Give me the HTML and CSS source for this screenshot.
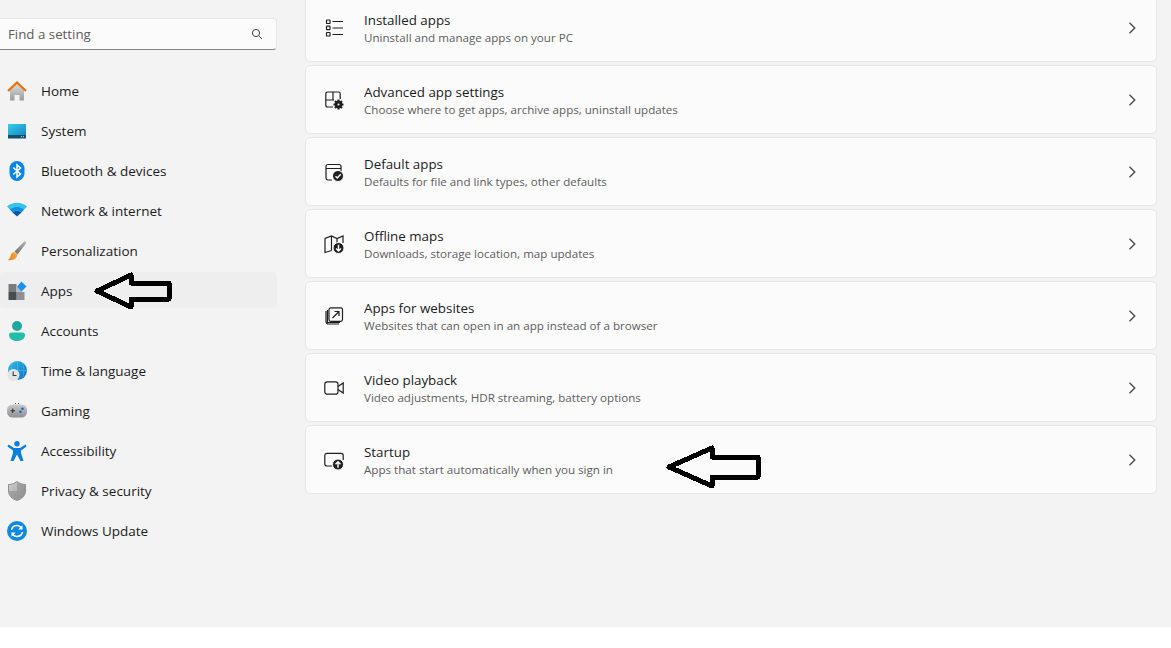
FILE: index.html
```html
<!DOCTYPE html>
<html lang="en">
<head>
    <meta charset="UTF-8">
    <title>Settings - Apps</title>
    <link rel="stylesheet" href="styles.css">
</head>
<body>
    <div class="window">
        <!-- Sidebar -->
        <aside class="sidebar">
            <div class="search">
                <span class="search-text">Find a setting</span>
                <svg class="search-icon" viewBox="0 0 12 12"><circle cx="5" cy="5" r="3.6"/><path d="M7.7 7.7 11 11"/></svg>
            </div>
            <nav class="nav">
                <a class="nav-item">
                    <svg class="nav-icon" viewBox="0 0 20 20">
                        <defs><linearGradient id="homeBody" x1="0" y1="0" x2="0" y2="1"><stop offset="0" stop-color="#dcdcdc"/><stop offset="1" stop-color="#9c9c9c"/></linearGradient></defs>
                        <path d="M3 9 10 2.5 17 9V19.5H12.5V14H7.5V19.5H3Z" fill="url(#homeBody)"/>
                        <path d="M1 10 10 1.5 19 10" fill="none" stroke="#e8710f" stroke-width="2.2"/>
                    </svg>
                    <span>Home</span>
                </a>
                <a class="nav-item">
                    <svg class="nav-icon" viewBox="0 0 20 20">
                        <defs><linearGradient id="sysTop" x1="0" y1="0" x2="1" y2="1"><stop offset="0" stop-color="#30d0e8"/><stop offset="1" stop-color="#1a86c8"/></linearGradient></defs>
                        <rect x="1" y="3" width="18" height="11" fill="url(#sysTop)"/>
                        <rect x="1" y="14" width="18" height="3.5" fill="#144f6c"/>
                        <rect x="14" y="15.2" width="1" height="1" fill="#cfe6ee"/>
                        <rect x="16" y="15.2" width="1" height="1" fill="#cfe6ee"/>
                    </svg>
                    <span>System</span>
                </a>
                <a class="nav-item">
                    <svg class="nav-icon" viewBox="0 0 20 20">
                        <rect x="2.500" y="0" width="15" height="20" rx="7.500" fill="#0a84e8"/>
                        <path d="M6.300 6.500 13.500 13 10 16V4L13.500 7 6.300 13.500" fill="none" stroke="#fff" stroke-width="1.500"/>
                    </svg>
                    <span>Bluetooth &amp; devices</span>
                </a>
                <a class="nav-item">
                    <svg class="nav-icon" viewBox="0 0 20 20">
                        <path d="M0 5.500C5.500 .5 14.500 .5 20 5.500L17.200 8.500C13 4.800 7 4.800 2.800 8.500Z" fill="#32c4ee"/>
                        <path d="M2.800 8.500C7 4.800 13 4.800 17.200 8.500L14.500 11.400C11.800 9.200 8.200 9.200 5.500 11.400Z" fill="#1090e0"/>
                        <path d="M5.500 11.400C8.200 9.200 11.800 9.200 14.500 11.400L10 15.500Z" fill="#0b58a8"/>
                    </svg>
                    <span>Network &amp; internet</span>
                </a>
                <a class="nav-item">
                    <svg class="nav-icon" viewBox="0 0 20 20">
                        <defs>
                            <linearGradient id="brushTip" x1="0" y1="1" x2="1" y2="0"><stop offset="0" stop-color="#f0781c"/><stop offset="1" stop-color="#f8b040"/></linearGradient>
                            <linearGradient id="brushHandle" x1="0" y1="1" x2="1" y2="0"><stop offset="0" stop-color="#6e6e6e"/><stop offset="1" stop-color="#b4b4b4"/></linearGradient>
                        </defs>
                        <path d="M7.500 10.500 17 .8C18.300 .2 19.500 1.200 19 2.500L10.500 13.500Z" fill="url(#brushHandle)"/>
                        <path d="M7 11C4.500 11.500 4 13 3.500 15 3 17 2 18.500 .5 19 5 20 10 18 10.500 13.800Z" fill="url(#brushTip)"/>
                    </svg>
                    <span>Personalization</span>
                </a>
                <a class="nav-item is-active">
                    <svg class="nav-icon" viewBox="0 0 20 20">
                        <rect x="1.500" y="3" width="8" height="8" fill="#777b80"/>
                        <rect x="9.500" y="11" width="8" height="8" fill="#8d9197"/>
                        <rect x="1.500" y="11" width="8" height="8" fill="#484c52"/>
                        <rect x="9.500" y="6" width="5" height="5" fill="#b6babe"/>
                        <path d="M14.500 .5 19.500 5.500 14.500 10.500 10 5.500Z" fill="#1a90f0"/>
                    </svg>
                    <span>Apps</span>
                </a>
                <a class="nav-item">
                    <svg class="nav-icon" viewBox="0 0 20 20">
                        <circle cx="10" cy="5" r="5" fill="#1fa89c"/>
                        <path d="M2 14C2 12.300 3.300 11.500 5 11.500H15C16.700 11.500 18 12.300 18 14 18 17.500 14.500 20 10 20S2 17.500 2 14Z" fill="#22bfa8"/>
                    </svg>
                    <span>Accounts</span>
                </a>
                <a class="nav-item">
                    <svg class="nav-icon" viewBox="0 0 20 20">
                        <defs><linearGradient id="globe" x1="0" y1="0" x2="1" y2="1"><stop offset="0" stop-color="#30bce8"/><stop offset="1" stop-color="#0f6cc4"/></linearGradient></defs>
                        <circle cx="10.500" cy="9.500" r="9.500" fill="url(#globe)"/>
                        <path d="M10.500 0V19M1 9.500H20M6 1.500C3.500 7 3.500 12 6 18M15 1.500C17.500 7 17.500 12 15 18" fill="none" stroke="#5cc4ea" stroke-width=".5"/>
                        <circle cx="6.500" cy="14" r="6" fill="#e4e4e4"/>
                        <path d="M6.200 10.500V14.500H9.500" fill="none" stroke="#3a3a3a" stroke-width="1.100"/>
                    </svg>
                    <span>Time &amp; language</span>
                </a>
                <a class="nav-item">
                    <svg class="nav-icon" viewBox="0 0 20 20">
                        <defs><linearGradient id="pad" x1="0" y1="0" x2="0" y2="1"><stop offset="0" stop-color="#c8c8c8"/><stop offset="1" stop-color="#8e9094"/></linearGradient></defs>
                        <rect x="0" y="3.500" width="20" height="13" rx="5.500" fill="url(#pad)"/>
                        <path d="M3.500 9.800H8M5.750 7.500V12" stroke="#333" stroke-width="1.100"/>
                        <circle cx="15.500" cy="7.800" r="1.200" fill="#0d62c8"/>
                        <circle cx="13.500" cy="10.800" r="1.200" fill="#0d62c8"/>
                        <rect x="8" y="2" width="1" height="1" fill="#555"/>
                        <rect x="11" y="2" width="1" height="1" fill="#555"/>
                    </svg>
                    <span>Gaming</span>
                </a>
                <a class="nav-item">
                    <svg class="nav-icon" viewBox="0 0 20 20">
                        <circle cx="10" cy="2.800" r="2.700" fill="#0a7ed8"/>
                        <path d="M1.500 3.500 7 7H13L18.500 3.500 19.500 5.500 14 9.500V12L16.500 20H13.500L10 13.500 6.500 20H3.500L6 12V9.500L.5 5.500Z" fill="#0a7ed8"/>
                    </svg>
                    <span>Accessibility</span>
                </a>
                <a class="nav-item">
                    <svg class="nav-icon" viewBox="0 0 20 20">
                        <defs><linearGradient id="shieldL" x1="0" y1="0" x2="1" y2="1"><stop offset="0" stop-color="#cfcfcf"/><stop offset="1" stop-color="#9a9a9a"/></linearGradient></defs>
                        <path d="M10 .5C7.500 2.500 4.500 3.500 1.500 3.500V10C1.500 14.500 5 18 10 19.500 15 18 18.500 14.500 18.500 10V3.500C15.500 3.500 12.500 2.500 10 .5Z" fill="url(#shieldL)" stroke="#7e7e7e" stroke-width=".8"/>
                        <path d="M10 1.500V10H2C2 14 5.500 17.500 10 18.800 14.500 17.500 18 14 18 10V4C15 4 12.500 3 10 1.500Z" fill="#858585" opacity=".5"/>
                    </svg>
                    <span>Privacy &amp; security</span>
                </a>
                <a class="nav-item">
                    <svg class="nav-icon" viewBox="0 0 20 20">
                        <circle cx="10" cy="10" r="10" fill="#0f8ae0"/>
                        <path d="M4.500 9C5 6.300 7.300 4.600 10 4.600 11.800 4.600 13.300 5.400 14.300 6.800M15.500 11C15 13.700 12.700 15.400 10 15.400 8.200 15.400 6.700 14.600 5.700 13.200" fill="none" stroke="#fff" stroke-width="1.500"/>
                        <path d="M15.500 4.200V8.400H11.300ZM4.500 15.800V11.600H8.700Z" fill="#fff"/>
                    </svg>
                    <span>Windows Update</span>
                </a>
            </nav>
        </aside>

        <!-- List of settings -->
        <main class="content">
            <section class="card">
                <svg class="card-icon" viewBox="0 0 20 20">
                    <rect x="2.500" y="2" width="3.500" height="3.500" rx=".6"/>
                    <rect x="2.500" y="8.200" width="3.500" height="3.500" rx=".6"/>
                    <rect x="2.500" y="14.500" width="3.500" height="3.500" rx=".6"/>
                    <path d="M8.500 3.500H19M8.500 10H19M8.500 16.500H19"/>
                </svg>
                <div class="card-text">
                    <div class="card-title">Installed apps</div>
                    <div class="card-sub">Uninstall and manage apps on your PC</div>
                </div>
                <svg class="chevron" viewBox="0 0 8 12"><path d="M1.500 .8 6.800 6 1.500 11.200"/></svg>
            </section>
            <section class="card">
                <svg class="card-icon" viewBox="0 0 20 20">
                    <path d="M9 17H3.500C2.500 17 1.800 16.300 1.800 15.300V3.700C1.800 2.700 2.500 2 3.500 2H14.500C15.500 2 16.200 2.700 16.200 3.700V9M1.800 10H10M9 2V10"/>
                    <path class="gear-teeth" d="M14.500 9.500V19.500M9.500 14.500H19.500M11 11 18 18M18 11 11 18"/>
                    <circle class="gear-body" cx="14.500" cy="14.500" r="3.800"/>
                    <circle class="gear-hole" cx="14.500" cy="14.500" r="1"/>
                </svg>
                <div class="card-text">
                    <div class="card-title">Advanced app settings</div>
                    <div class="card-sub">Choose where to get apps, archive apps, uninstall updates</div>
                </div>
                <svg class="chevron" viewBox="0 0 8 12"><path d="M1.500 .8 6.800 6 1.500 11.200"/></svg>
            </section>
            <section class="card">
                <svg class="card-icon" viewBox="0 0 20 20">
                    <path d="M8 18H4C2.900 18 2 17.100 2 16V4.500C2 3.400 2.900 2.500 4 2.500H15C16.100 2.500 17 3.400 17 4.500V9M2 6.500H17"/>
                    <circle class="solid" cx="14" cy="14" r="5.500"/>
                    <path class="cut" d="M11.500 14.200 13.300 16 16.700 12.300"/>
                </svg>
                <div class="card-text">
                    <div class="card-title">Default apps</div>
                    <div class="card-sub">Defaults for file and link types, other defaults</div>
                </div>
                <svg class="chevron" viewBox="0 0 8 12"><path d="M1.500 .8 6.800 6 1.500 11.200"/></svg>
            </section>
            <section class="card">
                <svg class="card-icon" viewBox="0 0 20 20">
                    <path d="M7.500 16.500 1 18.500V4.500L7.500 2 13 4.500 19 2V9M7.500 2V16.500M13 4.500V9"/>
                    <circle class="solid" cx="14.500" cy="14" r="5.500"/>
                    <path class="cut" d="M14.500 10.800V16.800M12 14.500 14.500 17 17 14.500"/>
                </svg>
                <div class="card-text">
                    <div class="card-title">Offline maps</div>
                    <div class="card-sub">Downloads, storage location, map updates</div>
                </div>
                <svg class="chevron" viewBox="0 0 8 12"><path d="M1.500 .8 6.800 6 1.500 11.200"/></svg>
            </section>
            <section class="card">
                <svg class="card-icon" viewBox="0 0 20 20">
                    <path d="M2 5V15.500C2 17 3 18 4.500 18H15"/>
                    <path d="M3.500 4V16.500H16"/>
                    <rect x="5" y="1.800" width="13.500" height="13.500" rx="1.800"/>
                    <path d="M8.500 12 15 5.500M10.500 5.500H15V10"/>
                </svg>
                <div class="card-text">
                    <div class="card-title">Apps for websites</div>
                    <div class="card-sub">Websites that can open in an app instead of a browser</div>
                </div>
                <svg class="chevron" viewBox="0 0 8 12"><path d="M1.500 .8 6.800 6 1.500 11.200"/></svg>
            </section>
            <section class="card">
                <svg class="card-icon" viewBox="0 0 20 20">
                    <rect x=".8" y="3.800" width="13.200" height="12.400" rx="2.500"/>
                    <path d="M14 8.500 19.200 5V15L14 11.500"/>
                </svg>
                <div class="card-text">
                    <div class="card-title">Video playback</div>
                    <div class="card-sub">Video adjustments, HDR streaming, battery options</div>
                </div>
                <svg class="chevron" viewBox="0 0 8 12"><path d="M1.500 .8 6.800 6 1.500 11.200"/></svg>
            </section>
            <section class="card">
                <svg class="card-icon" viewBox="0 0 20 20">
                    <path d="M8 16H3C1.700 16 .8 15.100 .8 13.800V5.500C.8 4.200 1.700 3.300 3 3.300H17C18.300 3.300 19.200 4.200 19.200 5.500V10"/>
                    <circle class="solid" cx="14" cy="14.500" r="5.500"/>
                    <path class="cut" d="M14 17.800V12M11.500 14.300 14 11.800 16.500 14.300"/>
                </svg>
                <div class="card-text">
                    <div class="card-title">Startup</div>
                    <div class="card-sub">Apps that start automatically when you sign in</div>
                </div>
                <svg class="chevron" viewBox="0 0 8 12"><path d="M1.500 .8 6.800 6 1.500 11.200"/></svg>
            </section>
        </main>

        <!-- Arrows drawn over the screenshot -->
        <svg class="arrow arrow-apps" viewBox="0 0 82 38"><path d="M3 19 37 3V11H75V27H37V35Z"/></svg>
        <svg class="arrow arrow-startup" viewBox="0 0 98 44"><path d="M3 22 46 3V12H92V32H46V41Z"/></svg>
    </div>
</body>
</html>
```

FILE: styles.css
```css
* {
    margin: 0;
    padding: 0;
    box-sizing: border-box;
}

body {
    background: #fff;
    font-family: "Open Sans", "Noto Sans", sans-serif;
    color: #1b1b1b;
    overflow: hidden;
}

/* Main window */
.window {
    position: relative;
    display: flex;
    height: 627px;
    background: #f3f3f3;
    overflow: hidden;
}

/* Sidebar */
.sidebar {
    width: 277px;
    flex-shrink: 0;
    padding-top: 18px;
}

.search {
    display: flex;
    align-items: center;
    justify-content: space-between;
    height: 32px;
    margin-left: -3px;
    padding: 0 13px 0 10px;
    background: #fbfbfb;
    border: 1px solid #e6e6e6;
    border-bottom: 1px solid #858585;
    border-radius: 4px;
}

.search-text {
    font-size: 13.3px;
    color: #5d5d5d;
}

.search-icon {
    width: 12px;
    height: 12px;
    fill: none;
    stroke: #444;
    stroke-width: 1;
}

.nav {
    display: flex;
    flex-direction: column;
    gap: 4px;
    margin-top: 22px;
}

.nav-item {
    display: flex;
    align-items: center;
    gap: 14px;
    height: 36px;
    padding: 2px 0 0 7px;
    font-size: 13.5px;
    border-radius: 4px;
}

.nav-item.is-active {
    background: #eeeeee;
}

.nav-icon {
    width: 20px;
    height: 20px;
    flex-shrink: 0;
}

/* Cards */
.content {
    flex: 1;
    display: flex;
    flex-direction: column;
    gap: 3px;
    margin-top: -7px;
    padding: 0 14px 0 28px;
}

.card {
    display: flex;
    align-items: center;
    height: 69px;
    padding: 1px 20px 0 18px;
    background: #fbfbfb;
    border: 1px solid #e6e6e6;
    border-radius: 5px;
}

.card-icon {
    width: 20px;
    height: 20px;
    flex-shrink: 0;
    margin-right: 20px;
    fill: none;
    stroke: #1f1f1f;
    stroke-width: 1.2;
}

.card-icon .solid {
    fill: #1f1f1f;
    stroke: #fbfbfb;
    stroke-width: 1;
}

.card-icon .cut {
    stroke: #fff;
    stroke-width: 1.4;
}

.card-icon .gear-teeth {
    stroke-width: 2.2;
}

.card-icon .gear-body {
    fill: #1f1f1f;
    stroke: none;
}

.card-icon .gear-hole {
    fill: #fbfbfb;
    stroke: none;
}

.card-text {
    flex: 1;
    padding-top: 2px;
}

.card-title {
    font-size: 13.35px;
    line-height: 18px;
}

.card-sub {
    font-size: 11.6px;
    line-height: 18px;
    color: #5d5d5d;
}

.chevron {
    width: 8px;
    height: 12px;
    fill: none;
    stroke: #444;
    stroke-width: 1.3;
}

/* Annotation arrows */
.arrow {
    position: absolute;
    fill: none;
    stroke: #000;
    stroke-width: 5;
    stroke-linejoin: round;
    shape-rendering: crispEdges;
}

.arrow-apps {
    left: 94px;
    top: 272px;
    width: 82px;
    height: 38px;
}

.arrow-startup {
    left: 666px;
    top: 445px;
    width: 98px;
    height: 44px;
}
```
